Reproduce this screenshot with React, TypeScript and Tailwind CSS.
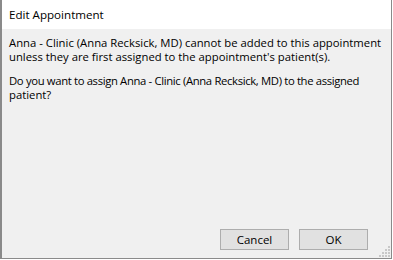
import React from 'react';

// Windows-style confirm dialog

function DialogButton({ label }: { label: string }) {
  return (
    <button className="w-[69px] h-[21px] bg-[#e1e1e1] border border-[#adadad] text-[11.5px] text-black leading-none">
      {label}
    </button>
  );
}

const grip = [
  [9, 0], [9, 3], [6, 3], [9, 6], [6, 6], [3, 6], [9, 9], [6, 9], [3, 9], [0, 9],
];

export default function App() {
  return (
    <div className="w-[393px] h-[260px] bg-white font-['Open_Sans',sans-serif]">
      <div className="flex flex-col w-[392px] h-[259px] border-l-2 border-r border-b border-[#8a8a8a] bg-[#f0f0f0]">
        <div className="h-[29px] shrink-0 bg-white flex items-center pl-[7px] pt-[1px] text-[11.6px] leading-[14px] text-black">
          Edit Appointment
        </div>
        <div className="flex-1 pl-[7px] pt-[7px] text-[11.3px] leading-[14px] text-black whitespace-nowrap">
          <p>
            Anna - Clinic (Anna Recksick, MD) cannot be added to this appointment
            <br />
            unless they are first assigned to the appointment's patient(s).
          </p>
          <p className="mt-[10px]">
            <span className="tracking-[-0.35px]">
              Do you want to assign Anna - Clinic (Anna Recksick, MD) to the assigned
            </span>
            <br />
            patient?
          </p>
        </div>
        <div className="relative flex justify-end gap-[10px] pr-[23px] pb-[8px]">
          <DialogButton label="Cancel" />
          <DialogButton label="OK" />
          <svg className="absolute right-[1px] bottom-[1px]" width="11" height="11" viewBox="0 0 11 11">
            {grip.map(([x, y]) => (
              <rect key={`${x}-${y}`} x={x} y={y} width="2" height="2" fill="#c8c8c8" />
            ))}
          </svg>
        </div>
      </div>
    </div>
  );
}
